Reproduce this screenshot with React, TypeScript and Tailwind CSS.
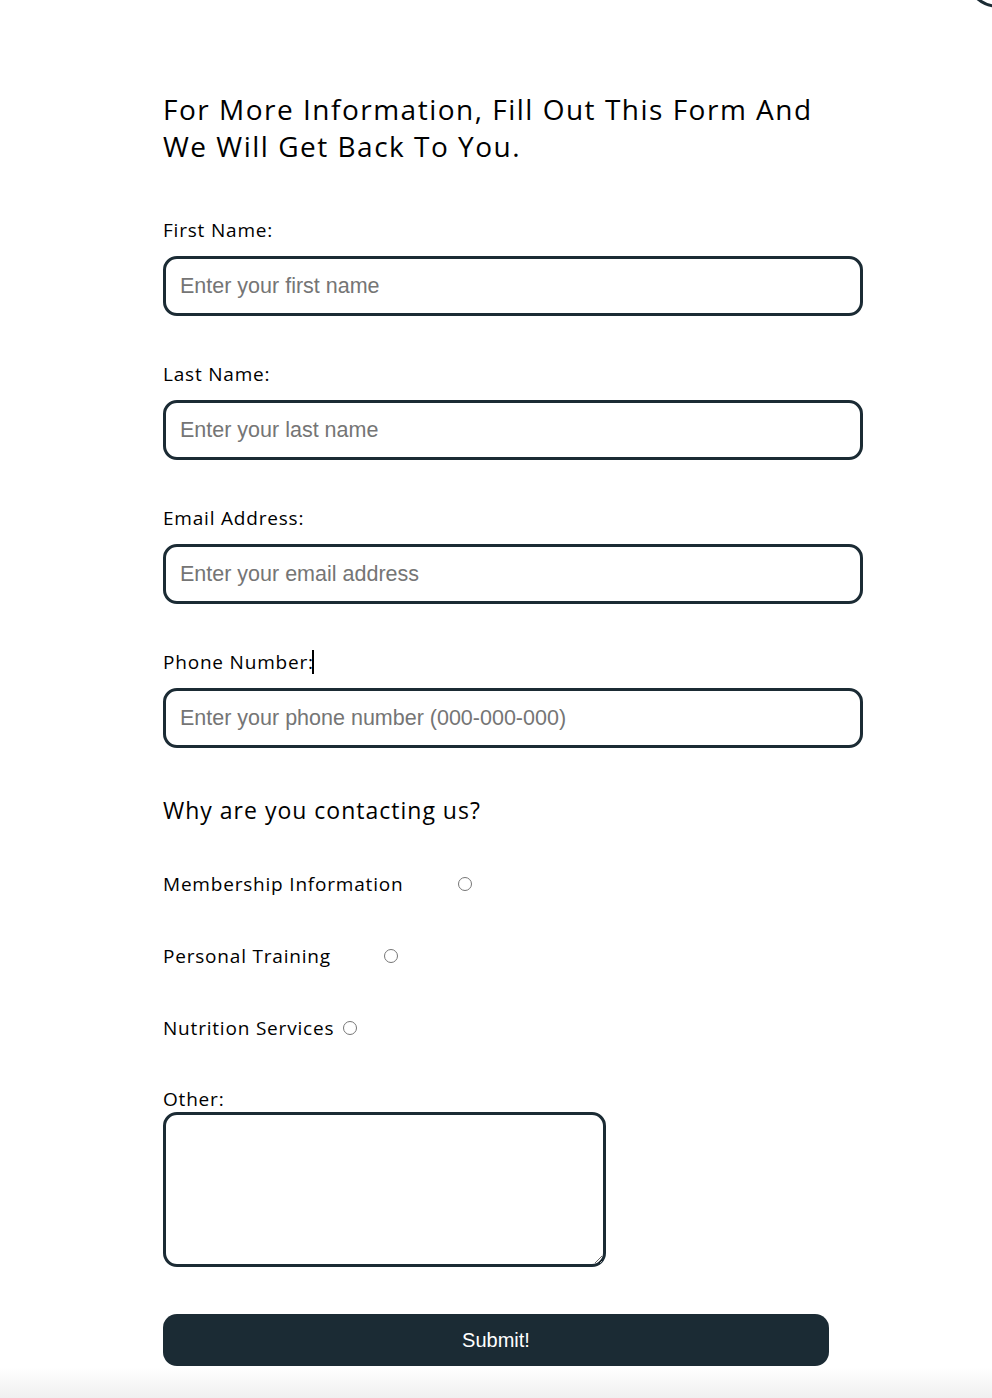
import React from 'react'

const fields = [
  { label: 'First Name:', placeholder: 'Enter your first name', type: 'text' },
  { label: 'Last Name:', placeholder: 'Enter your last name', type: 'text' },
  { label: 'Email Address:', placeholder: 'Enter your email address', type: 'email' },
  { label: 'Phone Number:', placeholder: 'Enter your phone number (000-000-000)', type: 'tel', caret: true },
]

const reasons = [
  { label: 'Membership Information', width: 'w-[295px]' },
  { label: 'Personal Training', width: 'w-[221px]' },
  { label: 'Nutrition Services', width: 'w-[180px]' },
]

export default function App() {
  return (
    <div className="relative min-h-[1398px] overflow-hidden bg-white text-black font-['Open_Sans','Noto_Sans',sans-serif]">
      {/* partially visible round control at top right */}
      <div className="absolute -right-[42px] -top-[62px] h-[70px] w-[70px] rounded-full border-[3px] border-[#1b2b34]" />

      <form className="flex w-[700px] flex-col pt-[91px] ml-[163px]" onSubmit={(e) => e.preventDefault()}>
        <h2 className="text-[28px] leading-[37px] font-normal tracking-[1.5px]">
          For More Information, Fill Out This Form And
          <br />
          We Will Get Back To You.
        </h2>

        <div className="mt-[52px] flex flex-col gap-[45px]">
          {fields.map((f) => (
            <div key={f.label} className="flex flex-col">
              <label className="flex items-center text-[19px] leading-[26px] tracking-[0.8px]">
                {f.label}
                {f.caret && <span className="-ml-[2px] inline-block h-[24px] w-[2px] bg-black" />}
              </label>
              <input
                type={f.type}
                placeholder={f.placeholder}
                className="mt-[13px] h-[60px] w-full rounded-[14px] border-[3px] border-[#1b2b34] px-[14px] text-[21.5px] font-['Liberation_Sans',Arial,sans-serif] outline-none placeholder:text-[#757575]"
              />
            </div>
          ))}
        </div>

        <h3 className="mt-[47px] text-[23px] leading-[30px] font-normal tracking-[1px]">Why are you contacting us?</h3>

        <div className="mt-[46px] flex flex-col gap-[46px]">
          {reasons.map((r) => (
            <label key={r.label} className="flex items-center text-[19px] leading-[26px] tracking-[0.8px]">
              <span className={r.width}>{r.label}</span>
              <input type="radio" name="reason" className="h-[14px] w-[14px] accent-[#1b2b34]" />
            </label>
          ))}
        </div>

        <label className="mt-[46px] text-[19px] leading-[24px] tracking-[0.8px]">Other:</label>
        <textarea className="mt-[1px] h-[155px] w-[443px] rounded-[14px] border-[3px] border-[#1b2b34] p-2 outline-none" />

        <button
          type="submit"
          className="mt-[47px] h-[52px] w-[666px] rounded-[14px] bg-[#1b2b34] text-[20px] text-white font-['Liberation_Sans',Arial,sans-serif]"
        >
          Submit!
        </button>
      </form>

      <div className="absolute bottom-0 left-0 right-0 h-[30px] bg-gradient-to-b from-white to-[#f0f0f0]" />
    </div>
  )
}
